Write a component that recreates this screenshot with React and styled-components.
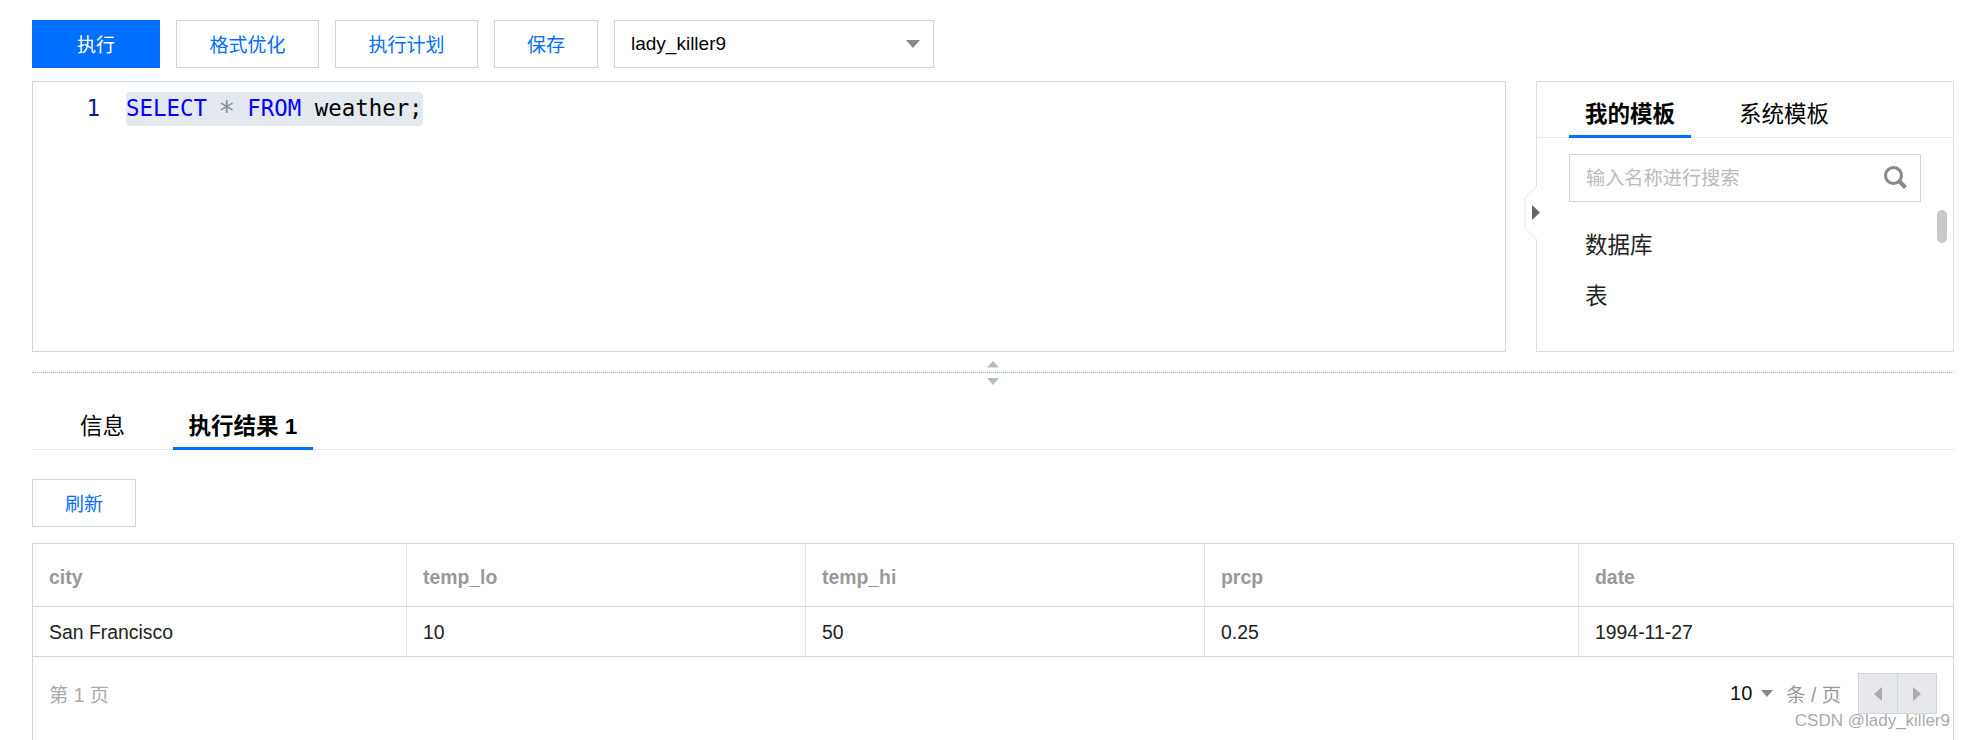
import React from 'react';
import styled, { createGlobalStyle } from 'styled-components';

const CJK = '"Liberation Sans", "Noto Sans CJK SC", sans-serif';
const BORDER = '#cfd5de';
const BLUE = '#006eff';

const GlobalStyle = createGlobalStyle`
  html, body {
    margin: 0;
    background: #fff;
    overflow: hidden;
  }
  * { box-sizing: border-box; }
`;

const Page = styled.div`
  position: relative;
  width: 1964px;
  height: 740px;
  overflow: hidden;
  padding: 20px 10px 0 32px;
  font-family: ${CJK};
  color: #000;
`;

const Toolbar = styled.div`
  display: flex;
  gap: 16px;
  height: 48px;
`;

const Button = styled.button`
  width: ${({ $w }) => $w}px;
  height: 48px;
  padding: 0 0 2px;
  border: 1px solid ${({ $primary }) => ($primary ? BLUE : BORDER)};
  background: ${({ $primary }) => ($primary ? BLUE : '#fff')};
  color: ${({ $primary }) => ($primary ? '#fff' : BLUE)};
  font-family: ${CJK};
  font-size: 19px;
`;

const Select = styled.div`
  width: 320px;
  height: 48px;
  border: 1px solid ${BORDER};
  display: flex;
  align-items: center;
  justify-content: space-between;
  padding: 0 13px 0 16px;
  font-size: 19px;
`;

const Caret = styled.span`
  width: 0;
  height: 0;
  border-left: ${({ $s }) => $s}px solid transparent;
  border-right: ${({ $s }) => $s}px solid transparent;
  border-top: ${({ $s }) => $s + 1}px solid #888;
`;

const EditorRow = styled.div`
  display: flex;
  gap: 30px;
  height: 271px;
  margin-top: 13px;
`;

const Editor = styled.div`
  flex: 1;
  border: 1px solid ${BORDER};
  display: flex;
  align-items: flex-start;
  padding-top: 10px;
  font-family: "DejaVu Sans Mono", monospace;
  font-size: 22.4px;
  line-height: 33px;
`;

const LineNo = styled.span`
  width: 67px;
  text-align: right;
  color: #0a1f7a;
`;

const Code = styled.code`
  display: inline-block;
  height: 34px;
  font-family: inherit;
  margin-left: 26px;
  background: #e4e8ef;
  border-radius: 4px;
`;

const Keyword = styled.span`
  color: #0000ff;
`;

const Star = styled.span`
  display: inline-block;
  color: #8492a0;
  transform: translateY(3px) scale(1.25);
`;

const Panel = styled.div`
  position: relative;
  width: 418px;
  border: 1px solid #d8dce4;
  display: flex;
  flex-direction: column;
`;

const PanelTabs = styled.div`
  display: flex;
  height: 56px;
  padding-left: 32px;
  border-bottom: 1px solid #e6e8ec;
`;

const PanelTab = styled.div`
  width: ${({ $w }) => $w}px;
  height: 56px;
  padding: 15px 0 0;
  text-align: center;
  font-size: 22.5px;
  line-height: 36px;
  font-weight: ${({ $active }) => ($active ? 700 : 400)};
  border-bottom: 3px solid ${({ $active }) => ($active ? BLUE : 'transparent')};
`;

const SearchBox = styled.div`
  width: 352px;
  height: 48px;
  margin: 16px 0 0 32px;
  border: 1px solid ${BORDER};
  display: flex;
  align-items: center;
  justify-content: space-between;
  padding: 0 13px 2px 16px;
  color: #bbb;
  font-size: 19.2px;
`;

const TreeList = styled.div`
  padding: 18px 0 0 48px;
`;

const TreeItem = styled.div`
  height: 51px;
  font-size: 22.5px;
  line-height: 51px;
  color: #222;
`;

const ScrollThumb = styled.div`
  position: absolute;
  left: 400px;
  top: 128px;
  width: 10px;
  height: 33px;
  border-radius: 5px;
  background: #c8c8c8;
`;

const Collapse = styled.svg`
  position: absolute;
  left: -13px;
  top: 103px;
`;

const Divider = styled.div`
  position: relative;
  margin-top: 20px;
  border-top: 1px dotted #a3bac0;
  height: 1px;
`;

const Grip = styled.svg`
  position: absolute;
  left: 954px;
  top: -12px;
`;

const ResultTabs = styled.div`
  display: flex;
  height: 77px;
  border-bottom: 1px solid #e6e8ec;
`;

const ResultTab = styled.div`
  width: ${({ $w }) => $w}px;
  height: 77px;
  padding-top: 36px;
  text-align: center;
  font-size: 22.5px;
  line-height: 36px;
  font-weight: ${({ $active }) => ($active ? 700 : 400)};
  border-bottom: 3px solid ${({ $active }) => ($active ? BLUE : 'transparent')};
`;

const RefreshRow = styled.div`
  margin-top: 29px;
`;

const Table = styled.div`
  margin-top: 16px;
  border: 1px solid ${BORDER};
  width: 1922px;
  height: 260px;
`;

const Row = styled.div`
  display: grid;
  grid-template-columns: 373px 399px 399px 374px 1fr;
  height: ${({ $h }) => $h}px;
  border-bottom: 1px solid ${BORDER};
`;

const Cell = styled.div`
  display: flex;
  align-items: center;
  padding: ${({ $head }) => ($head ? 4 : 2)}px 0 0 16px;
  font-size: 19.4px;
  font-weight: ${({ $head }) => ($head ? 700 : 400)};
  color: ${({ $head }) => ($head ? '#999' : '#222')};
  & + & { border-left: 1px solid #e2e6ec; }
`;

const Footer = styled.div`
  display: flex;
  justify-content: space-between;
  align-items: flex-start;
  padding: 16px 16px 0;
  color: #aaa;
  font-size: 19.3px;
`;

const PageNo = styled.div`
  line-height: 45px;
`;

const PageSize = styled.div`
  display: flex;
  align-items: center;
  height: 41px;
`;

const SizeValue = styled.span`
  color: #111;
  font-size: 20px;
  margin-right: 9px;
`;

const Unit = styled.span`
  margin: 0 17px 0 13px;
  color: #999;
`;

const Pager = styled.div`
  display: flex;
  width: 79px;
  height: 41px;
  border: 1px solid ${BORDER};
  background: #e6e8ec;
`;

const PagerBtn = styled.div`
  flex: 1;
  display: flex;
  align-items: center;
  justify-content: center;
  & + & { border-left: 1px solid ${BORDER}; }
`;

const Arrow = styled.span`
  width: 0;
  height: 0;
  border-top: 7px solid transparent;
  border-bottom: 7px solid transparent;
  ${({ $left }) => ($left ? 'border-right: 8px solid #a9adb3;' : 'border-left: 8px solid #a9adb3;')}
`;

const Watermark = styled.div`
  position: absolute;
  right: 14px;
  top: 711px;
  font-family: "Liberation Sans", sans-serif;
  font-size: 17px;
  line-height: 20px;
  color: rgba(110, 110, 110, 0.6);
`;

const columns = ['city', 'temp_lo', 'temp_hi', 'prcp', 'date'];
const values = ['San Francisco', '10', '50', '0.25', '1994-11-27'];

export default function App() {
  return (
    <Page>
      <GlobalStyle />
      <Toolbar>
        <Button $primary $w={128}>执行</Button>
        <Button $w={143}>格式优化</Button>
        <Button $w={143}>执行计划</Button>
        <Button $w={104}>保存</Button>
        <Select>
          lady_killer9
          <Caret $s={7} />
        </Select>
      </Toolbar>

      <EditorRow>
        <Editor>
          <LineNo>1</LineNo>
          <Code>
            <Keyword>SELECT</Keyword> <Star>*</Star> <Keyword>FROM</Keyword> weather;
          </Code>
        </Editor>
        <Panel>
          <PanelTabs>
            <PanelTab $active $w={122}>我的模板</PanelTab>
            <PanelTab $w={186}>系统模板</PanelTab>
          </PanelTabs>
          <SearchBox>
            输入名称进行搜索
            <svg width="24" height="24" viewBox="0 0 24 24" fill="none" stroke="#888">
              <circle cx="10.5" cy="10.5" r="8" strokeWidth="3" />
              <path d="M16.5 16.5L22.5 22.5" strokeWidth="4" />
            </svg>
          </SearchBox>
          <TreeList>
            <TreeItem>数据库</TreeItem>
            <TreeItem>表</TreeItem>
          </TreeList>
          <ScrollThumb />
          <Collapse width="16" height="56" viewBox="0 0 16 56">
            <path d="M13 1L1 13V43L13 55" fill="#fff" stroke="#e6e8ec" />
            <path d="M8 20L16 27.5L8 35Z" fill="#666" />
          </Collapse>
        </Panel>
      </EditorRow>

      <Divider>
        <Grip width="14" height="24" viewBox="0 0 14 24">
          <path d="M7 0L13 6.5H1Z" fill="#aebfc3" />
          <path d="M1 17H13L7 24Z" fill="#aebfc3" />
        </Grip>
      </Divider>

      <ResultTabs>
        <ResultTab $w={141}>信息</ResultTab>
        <ResultTab $active $w={140}>执行结果 1</ResultTab>
      </ResultTabs>

      <RefreshRow>
        <Button $w={104}>刷新</Button>
      </RefreshRow>

      <Table>
        <Row $h={63}>
          {columns.map((c) => <Cell $head key={c}>{c}</Cell>)}
        </Row>
        <Row $h={50}>
          {values.map((v) => <Cell key={v}>{v}</Cell>)}
        </Row>
        <Footer>
          <PageNo>第 1 页</PageNo>
          <PageSize>
            <SizeValue>10</SizeValue>
            <Caret $s={6} />
            <Unit>条 / 页</Unit>
            <Pager>
              <PagerBtn><Arrow $left /></PagerBtn>
              <PagerBtn><Arrow /></PagerBtn>
            </Pager>
          </PageSize>
        </Footer>
      </Table>

      <Watermark>CSDN @lady_killer9</Watermark>
    </Page>
  );
}
